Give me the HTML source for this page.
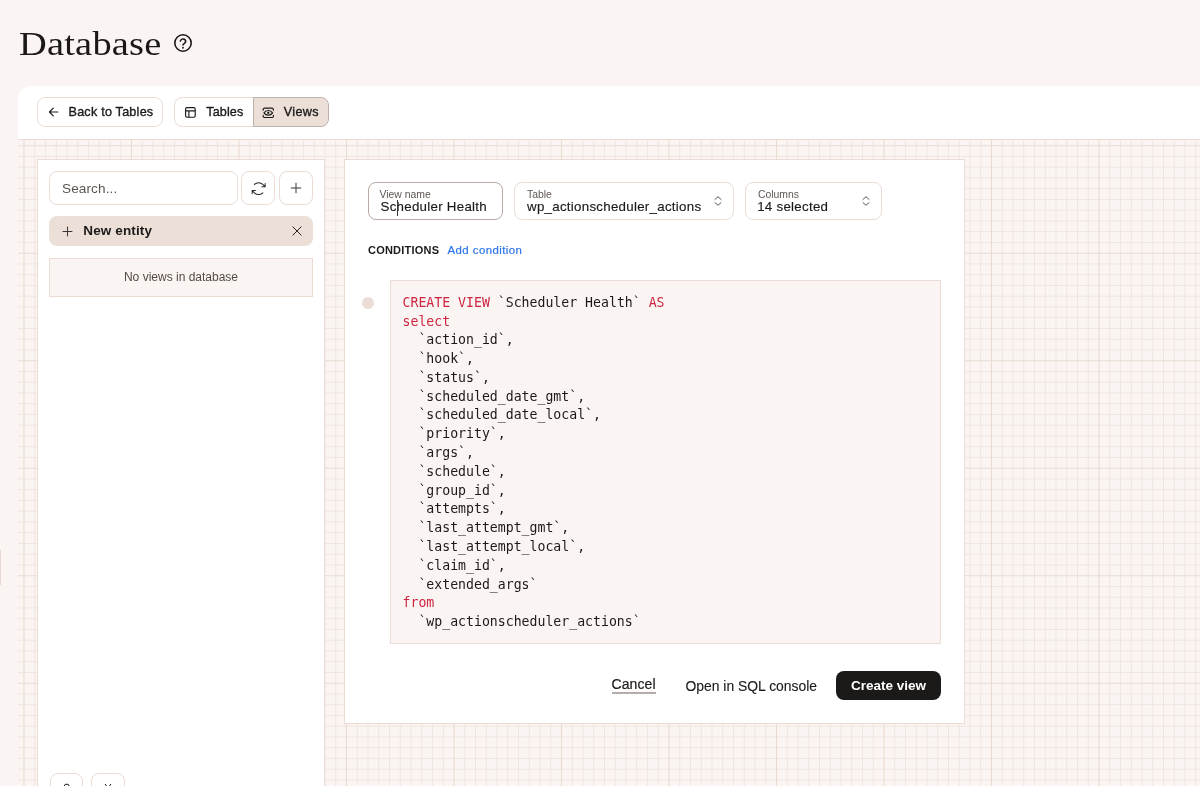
<!DOCTYPE html>
<html lang="en">
<head>
<meta charset="utf-8">
<title>Database</title>
<style>
*{box-sizing:border-box;margin:0;padding:0}
html,body{width:1200px;height:786px;overflow:hidden;background:#faf5f2}
body{position:relative;will-change:transform;font-family:"Liberation Sans",sans-serif;color:#1c1a19;font-size:13px}
.abs{position:absolute}
h1{position:absolute;left:19px;top:19.500px;font-family:"Liberation Serif",serif;font-weight:400;font-size:34.500px;line-height:46px;letter-spacing:.2px;transform:scaleX(1.113);transform-origin:0 0;color:#1b1918;white-space:nowrap}
.help{position:absolute;left:172.750px;top:32.900px;width:20px;height:20px}
.shell{position:absolute;left:18px;top:86px;width:1200px;height:720px;background:#fff;border-top-left-radius:13px;overflow:hidden}
.canvas{position:absolute;left:0;top:53px;width:1200px;height:660px;background:#faf5f2;border-top:1px solid #ebddd5}
.grid{position:absolute;left:0;top:-1px}
.btn{position:absolute;height:30px;border:1px solid #ebddd5;border-radius:8px;background:#fff;white-space:nowrap;font-size:12.600px;letter-spacing:.23px;line-height:28px;color:#1c1a19;-webkit-text-stroke:.35px #1c1a19}
.btn span{position:absolute;top:0}
.seg{position:absolute;left:174px;top:97px;width:153.500px;height:30px;border:1px solid #ebddd5;border-radius:8px;background:#fff}
.seg .on{position:absolute;left:78px;top:-1px;width:75.500px;height:30px;background:#ecdfd8;border:1px solid #bfb2ac;border-radius:0 8px 8px 0}
.seg span{position:absolute;top:0;line-height:28px;font-size:12.600px;letter-spacing:.1px;-webkit-text-stroke:.35px #1c1a19}
.panel{position:absolute;background:#fff;border:1px solid #ebddd5}
.ibox{position:absolute;border:1px solid #ebddd5;border-radius:8px;background:#fff}
.field{position:absolute;top:182px;height:37.700px;border:1px solid #ebddd5;border-radius:8px;background:#fff}
.field .lb{position:absolute;left:12px;top:5.500px;font-size:10.400px;line-height:12px;color:#5f5652}
.field .vl{position:absolute;left:12px;top:16px;font-size:13.300px;letter-spacing:.28px;line-height:16px;color:#1c1a19;white-space:nowrap;-webkit-text-stroke:.15px #1c1a19}
.field svg{position:absolute;right:11.300px;top:13px}
pre{position:absolute;left:390px;top:280px;width:551px;height:364px;background:#faf5f2;border:1px solid #ebddd5;font-family:"DejaVu Sans Mono","Liberation Mono",monospace;font-size:13.200px;line-height:18.780px;padding:12.800px 0 0 11.500px;color:#1c1a19;white-space:pre}
pre b{font-weight:400;color:#cf2540}
</style>
</head>
<body>
<h1>Database</h1>
<svg class="help" viewBox="0 0 20 20" fill="none" stroke="#1b1918" stroke-width="1.600" stroke-linecap="round" stroke-linejoin="round"><circle cx="10" cy="10" r="8.200"/><path d="M7.400 8a2.700 2.700 0 0 1 5.300 .600c0 1.800-2.700 2.100-2.700 3.400"/><circle cx="10" cy="14.700" r=".950" fill="#1b1918" stroke="none"/></svg>

<div class="shell">
  <div class="canvas"><svg class="grid" width="1182" height="647" viewBox="0 0 1182 647">
<path d="M16.75 0V647M27.50 0V647M38.25 0V647M49.00 0V647M59.75 0V647M70.50 0V647M81.25 0V647M92.00 0V647M102.75 0V647M124.25 0V647M135.00 0V647M145.75 0V647M156.50 0V647M167.25 0V647M178.00 0V647M188.75 0V647M199.50 0V647M210.25 0V647M231.75 0V647M242.50 0V647M253.25 0V647M264.00 0V647M274.75 0V647M285.50 0V647M296.25 0V647M307.00 0V647M317.75 0V647M339.25 0V647M350.00 0V647M360.75 0V647M371.50 0V647M382.25 0V647M393.00 0V647M403.75 0V647M414.50 0V647M425.25 0V647M446.75 0V647M457.50 0V647M468.25 0V647M479.00 0V647M489.75 0V647M500.50 0V647M511.25 0V647M522.00 0V647M532.75 0V647M554.25 0V647M565.00 0V647M575.75 0V647M586.50 0V647M597.25 0V647M608.00 0V647M618.75 0V647M629.50 0V647M640.25 0V647M661.75 0V647M672.50 0V647M683.25 0V647M694.00 0V647M704.75 0V647M715.50 0V647M726.25 0V647M737.00 0V647M747.75 0V647M769.25 0V647M780.00 0V647M790.75 0V647M801.50 0V647M812.25 0V647M823.00 0V647M833.75 0V647M844.50 0V647M855.25 0V647M876.75 0V647M887.50 0V647M898.25 0V647M909.00 0V647M919.75 0V647M930.50 0V647M941.25 0V647M952.00 0V647M962.75 0V647M984.25 0V647M995.00 0V647M1005.75 0V647M1016.50 0V647M1027.25 0V647M1038.00 0V647M1048.75 0V647M1059.50 0V647M1070.25 0V647M1091.75 0V647M1102.50 0V647M1113.25 0V647M1124.00 0V647M1134.75 0V647M1145.50 0V647M1156.25 0V647M1167.00 0V647M1177.75 0V647M0 17.45H1182M0 28.20H1182M0 38.95H1182M0 49.70H1182M0 60.45H1182M0 71.20H1182M0 81.95H1182M0 92.70H1182M0 103.45H1182M0 124.95H1182M0 135.70H1182M0 146.45H1182M0 157.20H1182M0 167.95H1182M0 178.70H1182M0 189.45H1182M0 200.20H1182M0 210.95H1182M0 232.45H1182M0 243.20H1182M0 253.95H1182M0 264.70H1182M0 275.45H1182M0 286.20H1182M0 296.95H1182M0 307.70H1182M0 318.45H1182M0 339.95H1182M0 350.70H1182M0 361.45H1182M0 372.20H1182M0 382.95H1182M0 393.70H1182M0 404.45H1182M0 415.20H1182M0 425.95H1182M0 447.45H1182M0 458.20H1182M0 468.95H1182M0 479.70H1182M0 490.45H1182M0 501.20H1182M0 511.95H1182M0 522.70H1182M0 533.45H1182M0 554.95H1182M0 565.70H1182M0 576.45H1182M0 587.20H1182M0 597.95H1182M0 608.70H1182M0 619.45H1182M0 630.20H1182M0 640.95H1182" stroke="#f1e5df" stroke-width="1" fill="none"/>
<path d="M6.00 0V647M113.50 0V647M221.00 0V647M328.50 0V647M436.00 0V647M543.50 0V647M651.00 0V647M758.50 0V647M866.00 0V647M973.50 0V647M1081.00 0V647M0 6.70H1182M0 114.20H1182M0 221.70H1182M0 329.20H1182M0 436.70H1182M0 544.20H1182" stroke="#e9dbd1" stroke-width="1.1" fill="none"/>
</svg></div>
</div>
<div class="abs" style="left:0;top:550px;width:1px;height:35px;background:#e6d8d0"></div>

<!-- toolbar -->
<div class="btn" style="left:37px;top:97px;width:126px">
  <svg class="abs" style="left:10px;top:8.400px" width="12" height="12" viewBox="0 0 12 12" fill="none" stroke="#1c1a19" stroke-width="1.2" stroke-linecap="round" stroke-linejoin="round"><path d="M9.800 6H1.500M5.200 2.200 1.500 6l3.700 3.800"/></svg>
  <span style="left:30.500px;top:0">Back to Tables</span>
</div>
<div class="seg">
  <svg class="abs" style="left:10.100px;top:8.900px" width="11" height="11" viewBox="0 0 11 11" fill="none" stroke="#1c1a19" stroke-width="1.150" stroke-linejoin="round"><rect x=".6" y=".6" width="9.6" height="9.6" rx="1.4"/><path d="M.6 3.900h9.600M3.900 3.900v6.300"/></svg>
  <span style="left:31.300px">Tables</span>
  <div class="on"></div>
  <svg class="abs" style="left:87.200px;top:8.500px" width="12.540" height="11.650" viewBox="0 0 14 13" fill="none" stroke="#1c1a19" stroke-width="1.300" stroke-linecap="round" stroke-linejoin="round"><path d="M1.3 3.6V2.8a1.5 1.5 0 0 1 1.5-1.5h8.4a1.5 1.5 0 0 1 1.5 1.5v.8M1.3 9.4v.8a1.5 1.5 0 0 0 1.5 1.5h8.4a1.5 1.5 0 0 0 1.5-1.5v-.8"/><path d="M2.2 6.5C3.3 4.8 5 3.9 7 3.9s3.700.9 4.800 2.600C10.700 8.200 9 9.100 7 9.100S3.300 8.200 2.200 6.500z"/><circle cx="7" cy="6.500" r="1.300" fill="#1c1a19" stroke="none"/></svg>
  <span style="left:108.700px;letter-spacing:.4px">Views</span>
</div>

<!-- left panel -->
<div class="panel" style="left:37px;top:159px;width:288px;height:640px"></div>
<div class="ibox" style="left:49px;top:171px;width:188.500px;height:33.500px"><span class="abs" style="left:12px;top:.500px;line-height:32px;font-size:13.600px;letter-spacing:.1px;color:#5f5652">Search...</span></div>
<div class="ibox" style="left:241px;top:171px;width:33.700px;height:33.500px">
  <svg class="abs" style="left:8.200px;top:7.500px" width="17.300" height="17.300" viewBox="0 0 256 256" fill="none" stroke="#2a2624" stroke-width="15" stroke-linecap="round" stroke-linejoin="round"><path d="M176.200 99.700H224v-48M65.800 65.800a87.900 87.900 0 0 1 124.400 0L224 99.700M79.800 156.300H32v48M190.200 190.200a87.900 87.900 0 0 1-124.400 0L32 156.300"/></svg>
</div>
<div class="ibox" style="left:279px;top:171px;width:34px;height:33.500px">
  <svg class="abs" style="left:10px;top:10.200px" width="12" height="12" viewBox="0 0 12 12" fill="none" stroke="#3a3432" stroke-width="1" stroke-linecap="round"><path d="M6 1.200v9.600M1.200 6h9.600"/></svg>
</div>
<div class="abs" style="left:49.300px;top:216px;width:263.500px;height:30px;border-radius:8px;background:#ecdfd8">
  <svg class="abs" style="left:13.200px;top:9.800px" width="11" height="11" viewBox="0 0 11 11" fill="none" stroke="#3a3432" stroke-width="1" stroke-linecap="round"><path d="M5.500 1v9M1 5.500h9"/></svg>
  <span class="abs" style="left:34px;top:0;line-height:30.500px;font-size:13.500px;letter-spacing:.12px;font-weight:700;color:#1c1a19">New entity</span>
  <svg class="abs" style="left:243px;top:10px" width="10" height="10" viewBox="0 0 10 10" fill="none" stroke="#2a2624" stroke-width="1" stroke-linecap="round"><path d="M.800 .800l8.400 8.400M9.200 .800 .800 9.200"/></svg>
</div>
<div class="abs" style="left:49px;top:258px;width:264px;height:39px;background:#faf5f2;border:1px solid #ebddd5;text-align:center;line-height:37px;font-size:12px;color:#544b47">No views in database</div>
<div class="ibox" style="left:50px;top:773px;width:33px;height:34px"></div>
<div class="ibox" style="left:91px;top:773px;width:34px;height:34px"></div>
<svg class="abs" style="left:55px;top:779px" width="70" height="10" viewBox="55 778 70 10" fill="none" stroke="#1c1a19" stroke-width="1" stroke-linecap="round" stroke-linejoin="round"><path d="M62.500 786.500l1.700-1.300 1-1.900h3l1 1.900 1.700 1.300M105.300 783.300l1.600 2.200h2.200l1.600-2.200M102 785.700v1M113.800 785.700v1"/></svg>

<!-- main card -->
<div class="panel" style="left:344px;top:159px;width:621px;height:565px"></div>
<div class="field" style="left:367.500px;width:135.500px;border-color:#b8aaa4"><div class="lb" style="left:11px">View name</div><div class="vl">Scheduler Health</div><div class="abs" style="left:28.300px;top:16.500px;width:1px;height:16px;background:#3a3533"></div></div>
<div class="field" style="left:514px;width:220px"><div class="lb">Table</div><div class="vl">wp_actionscheduler_actions</div>
  <svg width="8" height="10" viewBox="0 0 8 10" fill="none" stroke="#5a514d" stroke-width="1" stroke-linecap="round" stroke-linejoin="round"><path d="M1 3.400 4 .700 7 3.400M1 6.600 4 9.300 7 6.600"/></svg></div>
<div class="field" style="left:745px;width:137px"><div class="lb">Columns</div><div class="vl" style="left:11.200px">14 selected</div>
  <svg width="8" height="10" viewBox="0 0 8 10" fill="none" stroke="#5a514d" stroke-width="1" stroke-linecap="round" stroke-linejoin="round"><path d="M1 3.400 4 .700 7 3.400M1 6.600 4 9.300 7 6.600"/></svg></div>

<div class="abs" style="left:368px;top:242px;font-size:11px;line-height:16px;font-weight:700;letter-spacing:.22px;color:#1c1a19">CONDITIONS</div>
<div class="abs" style="left:447.500px;top:241.700px;font-size:11.400px;letter-spacing:.45px;line-height:16px;color:#2b74ec;-webkit-text-stroke:.2px #2b74ec">Add condition</div>

<div class="abs" style="left:362px;top:297px;width:12px;height:12px;border-radius:50%;background:#ebddd5"></div>
<pre><b>CREATE VIEW</b> `Scheduler Health` <b>AS</b>
<b>select</b>
  `action_id`,
  `hook`,
  `status`,
  `scheduled_date_gmt`,
  `scheduled_date_local`,
  `priority`,
  `args`,
  `schedule`,
  `group_id`,
  `attempts`,
  `last_attempt_gmt`,
  `last_attempt_local`,
  `claim_id`,
  `extended_args`
<b>from</b>
  `wp_actionscheduler_actions`</pre>

<div class="abs" style="left:611.500px;top:676px;font-size:14px;letter-spacing:.1px;line-height:16.500px;color:#1c1a19;-webkit-text-stroke:.2px #1c1a19">Cancel</div>
<div class="abs" style="left:612px;top:691.500px;width:44px;height:2px;background:linear-gradient(#c9c0bc,#a89d98 40%,#a89d98 60%,#d5cdc9)"></div>
<div class="abs" style="left:685.500px;top:677.200px;font-size:13.900px;line-height:18px;color:#1c1a19;-webkit-text-stroke:.12px #1c1a19">Open in SQL console</div>
<div class="abs" style="left:836.300px;top:670.500px;width:104.300px;height:29.500px;border-radius:8px;background:#1b1a19;color:#fff;font-weight:700;font-size:13.500px;line-height:30.500px;text-align:center">Create view</div>
</body>
</html>
